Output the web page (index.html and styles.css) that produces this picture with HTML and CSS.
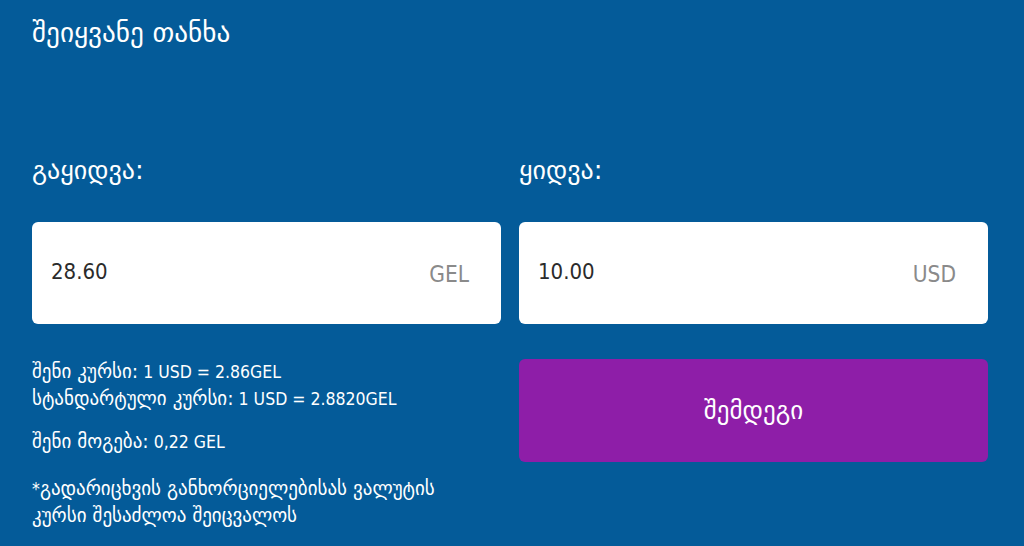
FILE: index.html
```html
<!DOCTYPE html>
<html lang="ka">
<head>
<meta charset="utf-8">
<link rel="stylesheet" href="styles.css">
</head>
<body>
<div class="page">
  <h1 class="title">შეიყვანე თანხა</h1>
  <div class="grid">
    <div class="col">
      <div class="label">გაყიდვა:</div>
      <div class="field"><span class="amount">28.60</span><span class="cur">GEL</span></div>
      <div class="info">
        <p class="line">შენი კურსი:<span class="num"> 1 USD = 2.86GEL</span></p>
        <p class="line">სტანდარტული კურსი:<span class="num"> 1 USD = 2.8820GEL</span></p>
        <p class="line gap">შენი მოგება:<span class="num"> 0,22 GEL</span></p>
        <p class="line gap2"><span class="num">*</span>გადარიცხვის განხორციელებისას ვალუტის<br>კურსი შესაძლოა შეიცვალოს</p>
      </div>
    </div>
    <div class="col">
      <div class="label">ყიდვა:</div>
      <div class="field"><span class="amount">10.00</span><span class="cur">USD</span></div>
      <button class="next">შემდეგი</button>
    </div>
  </div>
</div>
</body>
</html>
```
FILE: styles.css
```css
* { box-sizing: border-box; }
html, body { margin: 0; padding: 0; }
body {
  background: #045b99;
  color: #fff;
  font-family: "DejaVu Sans", sans-serif;
  width: 1024px;
  height: 546px;
  overflow: hidden;
}
.page { padding: 20px 36px 0 32px; }
.title {
  margin: 0;
  font-size: 27.2px;
  font-weight: normal;
  line-height: 26px;
  height: 26px;
}
.grid {
  display: grid;
  grid-template-columns: 1fr 1fr;
  column-gap: 18px;
  margin-top: 111px;
}
.label {
  font-size: 26px;
  line-height: 26px;
  height: 26px;
}
.field {
  margin-top: 39px;
  height: 102px;
  background: #fff;
  border-radius: 6px;
  display: flex;
  align-items: center;
  justify-content: space-between;
  padding: 0 32px 0 19px;
  font-family: "DejaVu Sans Condensed", "DejaVu Sans", sans-serif;
}
.amount { color: #2b2b2b; font-size: 22px; margin-top: -4px; }
.cur { color: #8a8a8a; font-size: 22.5px; margin-top: 1px; }
.info { margin-top: 34px; font-size: 19px; }
.line { margin: 0; line-height: 27px; }
.line.gap { margin-top: 16px; }
.line.gap2 { margin-top: 20px; }
.num {
  font-family: "DejaVu Sans Condensed", "DejaVu Sans", sans-serif;
  font-size: 17.5px;
  line-height: 20px;
}
.next {
  display: block;
  width: 100%;
  margin-top: 35px;
  height: 103px;
  border: none;
  border-radius: 6px;
  background: #8e1ea8;
  color: #fff;
  font-family: inherit;
  font-size: 25px;
  padding: 0;
}
```
